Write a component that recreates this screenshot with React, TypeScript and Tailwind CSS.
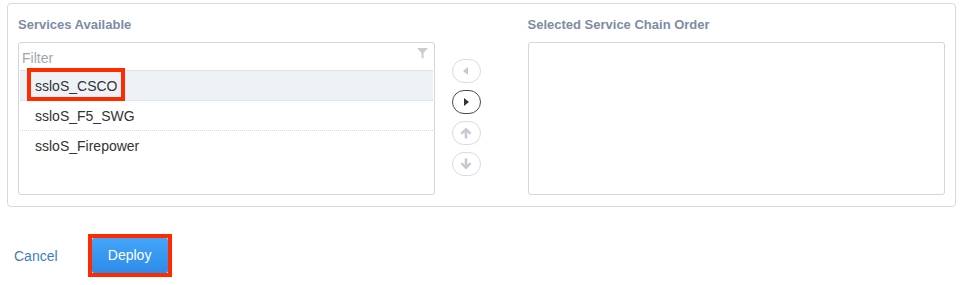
import React from 'react';

const services = ['ssloS_CSCO', 'ssloS_F5_SWG', 'ssloS_Firepower'];

function CircleButton({ active, children }: { active?: boolean; children: React.ReactNode }) {
  return (
    <button
      className={
        active
          ? 'w-[29px] h-[24px] rounded-full border border-[#4a4a4a] bg-white flex items-center justify-center'
          : 'w-[29px] h-[24px] rounded-full border border-[#d9dbe1] bg-white flex items-center justify-center'
      }
    >
      {children}
    </button>
  );
}

export default function App() {
  return (
    <div className="w-[961px] h-[285px] bg-white font-['Liberation_Sans',Arial,sans-serif] pt-[3px]">
      <div className="mx-[7px] w-[949px] h-[204px] border border-[#d6d9df] rounded-[4px] pl-[10px] pr-[10px] pt-[13px]">
        <div className="flex">
          {/* Services available */}
          <div className="w-[417px]">
            <div className="text-[13px] leading-[16px] font-bold text-[#7d8ca3] mb-[9px]">Services Available</div>
            <div className="h-[153px] border border-[#d3d6dc] rounded-[3px] px-[1px]">
              <div className="h-[28px] border-b border-[#dfe1e5] flex items-center justify-between pl-[2px] pr-[5px] pt-[4px]">
                <span className="text-[14px] text-[#a3a7ad]">Filter</span>
                <svg width="11" height="11" viewBox="0 0 11 11" className="-mt-[10px]">
                  <path d="M0 0 H11 L6.5 5 V11 L4.5 9.5 V5 Z" fill="#c9ccd2" />
                </svg>
              </div>
              {services.map((s, i) => (
                <div
                  key={s}
                  className={
                    i === 0
                      ? 'relative h-[30px] bg-[#eef2f7] border-b border-dotted border-[#d4d7dc] flex items-center pl-[15px] pt-[1px] text-[14px] text-[#333]'
                      : i === 1
                      ? 'h-[30px] border-b border-dotted border-[#d4d7dc] flex items-center pl-[15px] pt-[1px] text-[14px] text-[#333]'
                      : 'h-[30px] flex items-center pl-[15px] pt-[1px] text-[14px] text-[#333]'
                  }
                >
                  {s}
                  {i === 0 && (
                    <div className="absolute left-[7px] top-[-3px] w-[98px] h-[33px] border-[4px] border-[#ff2a00]" />
                  )}
                </div>
              ))}
            </div>
          </div>

          {/* move buttons */}
          <div className="ml-[17px] w-[29px] pt-[42px] flex flex-col gap-[7px]">
            <CircleButton>
              <svg width="6" height="8" viewBox="0 0 6 8">
                <path d="M5 0 V8 L0 4 Z" fill="#c5c9d1" />
              </svg>
            </CircleButton>
            <CircleButton active>
              <svg width="6" height="8" viewBox="0 0 6 8">
                <path d="M1 0 V8 L6 4 Z" fill="#333" />
              </svg>
            </CircleButton>
            <CircleButton>
              <svg width="12" height="12" viewBox="0 0 11 11">
                <path d="M5.5 0.5 L10.5 5.5 L9 7 L6.7 4.7 V10.5 H4.3 V4.7 L2 7 L0.5 5.5 Z" fill="#c5c9d1" />
              </svg>
            </CircleButton>
            <CircleButton>
              <svg width="12" height="12" viewBox="0 0 11 11">
                <path d="M5.5 10.5 L10.5 5.5 L9 4 L6.7 6.3 V0.5 H4.3 V6.3 L2 4 L0.5 5.5 Z" fill="#c5c9d1" />
              </svg>
            </CircleButton>
          </div>

          {/* selected chain */}
          <div className="ml-[48px] w-[417px]">
            <div className="text-[13px] leading-[16px] font-bold text-[#7d8ca3] mb-[9px] -ml-[1px]">Selected Service Chain Order</div>
            <div className="h-[153px] border border-[#d3d6dc] rounded-[3px] -ml-[1px]" />
          </div>
        </div>
      </div>

      <div className="flex items-center mt-[27px] pl-[14px]">
        <button className="text-[14px] text-[#3d7fbf] pt-[1px]">Cancel</button>
        <div className="ml-[30px] border-[4px] border-[#ff2a00] p-0">
          <button className="w-[76px] h-[35px] rounded-[2px] bg-gradient-to-b from-[#43a5f8] to-[#2e8be9] text-white text-[14px]">
            Deploy
          </button>
        </div>
      </div>
    </div>
  );
}
